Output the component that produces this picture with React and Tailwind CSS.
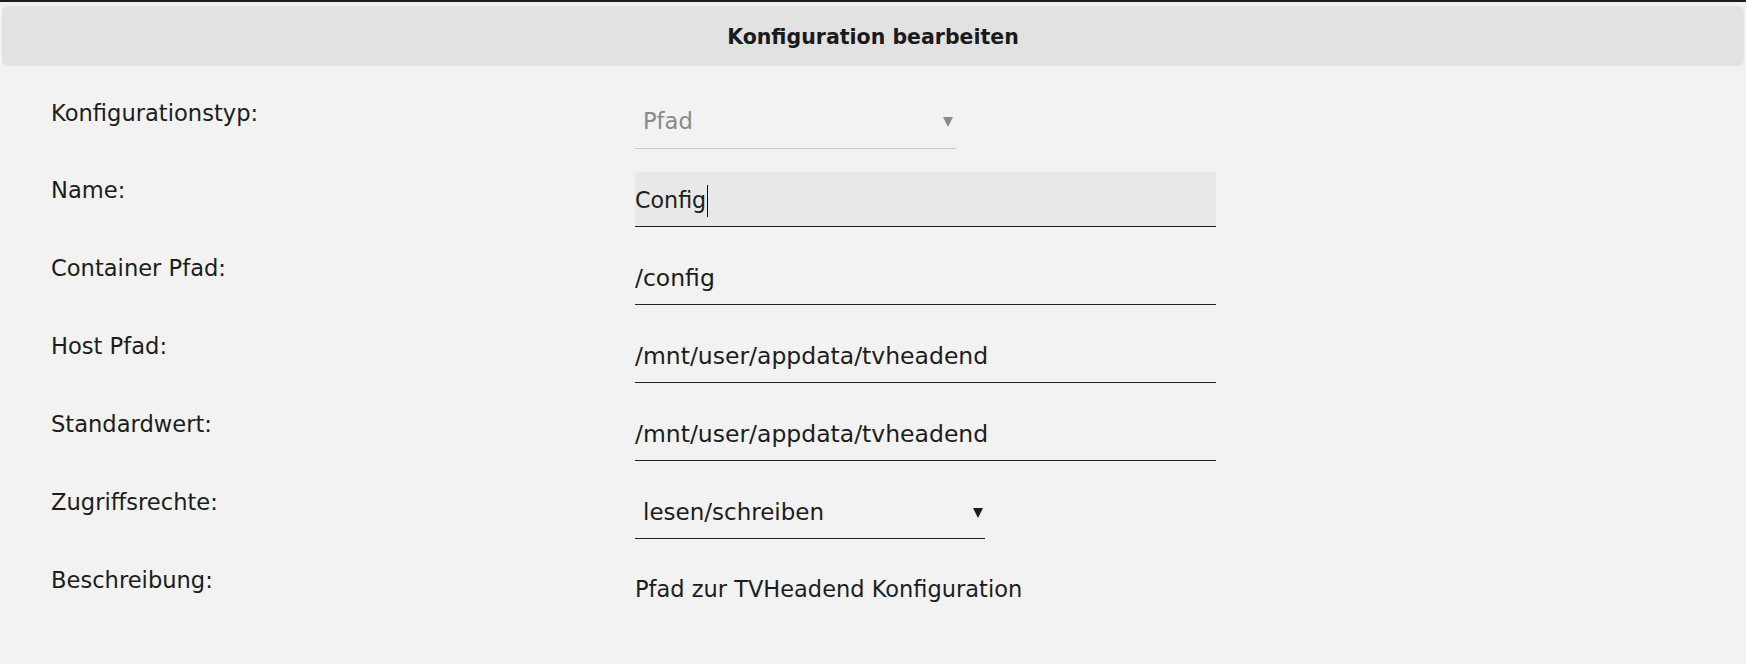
import React from 'react';

const Arrow = ({ color }) => (
  <svg width="10" height="11" viewBox="0 0 10 11" className="shrink-0">
    <polygon points="0,1 10,1 5,11" fill={color} />
  </svg>
);

const Row = ({ label, children }) => (
  <div className="flex items-start">
    <div className="w-[584px] shrink-0 pt-[3px] text-[22.6px] leading-[30px] text-[#1c1c1c]">{label}</div>
    {children}
  </div>
);

const TextField = ({ value, focused }) => (
  <div
    className={`w-[581px] h-[55px] pt-[3px] border-b border-[#222] flex items-center text-[#1c1c1c] ${
      focused ? 'bg-[#e8e8e8] text-[22.2px]' : 'text-[23.5px]'
    }`}
  >
    <span>{value}</span>
    {focused && <span className="ml-[1px] w-[1px] h-[32px] bg-[#111]" />}
  </div>
);

const App = () => {
  return (
    <div className="min-h-screen bg-[#f2f2f2] border-t-2 border-[#1e1e1e] font-['DejaVu_Sans',sans-serif]">
      {/* Titel */}
      <div className="mx-[2px] mt-[4px] h-[60px] pt-[2px] rounded-md bg-[#e2e2e2] flex items-center justify-center">
        <h2 className="text-[20.5px] font-bold text-[#1a1a1a]">Konfiguration bearbeiten</h2>
      </div>

      {/* Formular */}
      <div className="pl-[51px] pt-[29px] flex flex-col gap-[23px]">
        <Row label="Konfigurationstyp:">
          <div className="w-[321px] h-[54px] border-b border-[#cacaca] flex items-center justify-between pl-[8px] pr-[3px] text-[22.6px] text-[#8a8a8a]">
            <span>Pfad</span>
            <Arrow color="#8a8a8a" />
          </div>
        </Row>

        <Row label="Name:">
          <TextField value="Config" focused />
        </Row>

        <Row label="Container Pfad:">
          <TextField value="/config" />
        </Row>

        <Row label="Host Pfad:">
          <TextField value="/mnt/user/appdata/tvheadend" />
        </Row>

        <Row label="Standardwert:">
          <TextField value="/mnt/user/appdata/tvheadend" />
        </Row>

        <Row label="Zugriffsrechte:">
          <div className="w-[350px] h-[55px] pt-[2px] border-b border-[#222] flex items-center justify-between pl-[8px] pr-[2px] text-[23px] text-[#1c1c1c]">
            <span>lesen/schreiben</span>
            <Arrow color="#1c1c1c" />
          </div>
        </Row>

        <Row label="Beschreibung:">
          <div className="pt-[12px] text-[22.5px] leading-[30px] text-[#1c1c1c]">Pfad zur TVHeadend Konfiguration</div>
        </Row>
      </div>
    </div>
  );
};

export default App;
